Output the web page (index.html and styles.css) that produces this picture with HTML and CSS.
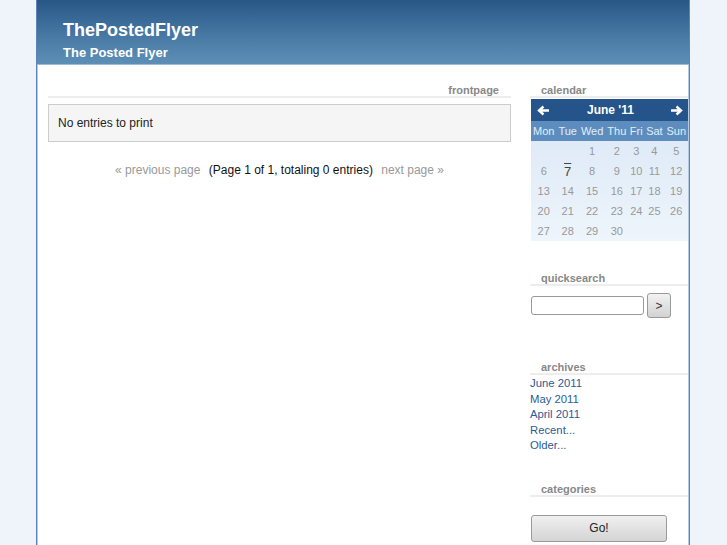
FILE: index.html
```html
<!DOCTYPE html>
<html lang="en">
<head>
    <meta charset="UTF-8">
    <title>ThePostedFlyer</title>
    <link rel="stylesheet" href="styles.css">
</head>
<body>
    <div class="page">
        <div class="header">
            <h1>ThePostedFlyer</h1>
            <h2>The Posted Flyer</h2>
        </div>
        <div class="content">
            <div class="main">
                <h3 class="main-title">frontpage</h3>
                <div class="entry">No entries to print</div>
                <div class="pager">
                    <a href="#" class="pager-link">&laquo; previous page</a>
                    <span class="pager-info">(Page 1 of 1, totaling 0 entries)</span>
                    <a href="#" class="pager-link">next page &raquo;</a>
                </div>
            </div>
            <div class="sidebar">
                <div class="widget widget-calendar">
                    <h3 class="side-title">calendar</h3>
                    <table class="calendar">
                        <tr class="cal-head">
                            <td class="cal-arrow">
                                <svg width="13" height="11" viewBox="0 0 13 11"><path d="M12 5.5H3M6.5 1.5L2 5.5l4.5 4" fill="none" stroke="#fff" stroke-width="2.4"/></svg>
                            </td>
                            <td colspan="5" class="cal-month">June '11</td>
                            <td class="cal-arrow">
                                <svg width="13" height="11" viewBox="0 0 13 11"><path d="M1 5.5h9M6.5 1.5L11 5.5l-4.5 4" fill="none" stroke="#fff" stroke-width="2.4"/></svg>
                            </td>
                        </tr>
                        <tr class="cal-days">
                            <td>Mon</td><td>Tue</td><td>Wed</td><td>Thu</td><td>Fri</td><td>Sat</td><td>Sun</td>
                        </tr>
                        <tr><td></td><td></td><td>1</td><td>2</td><td>3</td><td>4</td><td>5</td></tr>
                        <tr><td>6</td><td class="today">7</td><td>8</td><td>9</td><td>10</td><td>11</td><td>12</td></tr>
                        <tr><td>13</td><td>14</td><td>15</td><td>16</td><td>17</td><td>18</td><td>19</td></tr>
                        <tr><td>20</td><td>21</td><td>22</td><td>23</td><td>24</td><td>25</td><td>26</td></tr>
                        <tr><td>27</td><td>28</td><td>29</td><td>30</td><td></td><td></td><td></td></tr>
                    </table>
                </div>
                <div class="widget widget-search">
                    <h3 class="side-title">quicksearch</h3>
                    <form class="search">
                        <input type="text" class="search-input">
                        <button type="button" class="search-btn">&gt;</button>
                    </form>
                </div>
                <div class="widget widget-archives">
                    <h3 class="side-title">archives</h3>
                    <ul class="archive-list">
                        <li><a href="#">June 2011</a></li>
                        <li><a href="#">May 2011</a></li>
                        <li><a href="#">April 2011</a></li>
                        <li><a href="#">Recent...</a></li>
                        <li><a href="#">Older...</a></li>
                    </ul>
                </div>
                <div class="widget widget-categories">
                    <h3 class="side-title">categories</h3>
                    <button type="button" class="go-btn">Go!</button>
                </div>
            </div>
        </div>
    </div>
</body>
</html>
```

FILE: styles.css
```css
body {
    margin: 0;
    background: #eef4fa;
    font-family: "Liberation Sans", Arial, sans-serif;
    color: #222;
}

.page {
    width: 652px;
    min-height: 545px;
    margin: 0 0 0 36px;
    background: #fff;
    border-left: 1px solid #5f84b4;
    border-right: 1px solid #5f84b4;
    box-shadow: inset 1px 0 #b3c9e3, inset -1px 0 #b3c9e3;
}

.header {
    height: 64px;
    padding-left: 26px;
    background: linear-gradient(to bottom, #285786, #4a7ba6 60%, #5d8fb6);
    border-bottom: 1px solid #9cbcd6;
    color: #fff;
}

.header h1 {
    margin: 0;
    padding-top: 19px;
    font-size: 18px;
    line-height: 22px;
}

.header h2 {
    margin: 4px 0 0;
    font-size: 13px;
    line-height: 16px;
}

.content {
    display: flex;
    padding: 0 1px 0 11px;
}

.main {
    width: 463px;
}

.main-title,
.side-title {
    margin: 0;
    font-size: 11px;
    line-height: 12px;
    color: #888;
    border-bottom: 2px solid #ededed;
}

.main-title {
    margin-top: 19px;
    text-align: right;
    padding-right: 12px;
}

.entry {
    margin-top: 6px;
    padding: 11px 9px;
    font-size: 12px;
    line-height: 14px;
    background: #f5f5f5;
    border: 1px solid #ccc;
}

.pager {
    margin-top: 21px;
    text-align: center;
    font-size: 12px;
    line-height: 14px;
}

.pager-link {
    color: #999;
    text-decoration: none;
}

.pager-info {
    margin: 0 5px;
    color: #111;
}

.sidebar {
    width: 158px;
    margin-left: 19px;
}

.side-title {
    padding-left: 11px;
}

.widget-calendar {
    margin-top: 19px;
}

.calendar {
    width: 157px;
    margin: 1px 0 0 1px;
    border-collapse: collapse;
    font-size: 11px;
    background: linear-gradient(to bottom, #d8e6f5, #eef5fc);
}

.calendar td {
    padding: 0 1px;
    height: 20px;
    text-align: center;
    color: #999;
}

.cal-head td {
    height: 22px;
    background: #24548a;
    color: #fff;
    font-weight: bold;
    font-size: 12px;
}

.cal-head svg {
    display: block;
    margin: 0 auto;
}

.cal-days td {
    background: #5d8dbf;
    color: #e2edf8;
}

.calendar .today {
    color: #444;
    font-size: 13px;
    text-decoration: overline;
}

.widget-search {
    margin-top: 31px;
}

.search {
    display: flex;
    align-items: center;
    margin: 7px 0 0 1px;
}

.search-input {
    width: 109px;
    height: 15px;
    padding: 1px;
    border: 1px solid #999;
    border-radius: 3px;
}

.search-btn {
    width: 24px;
    height: 25px;
    margin-left: 3px;
    padding: 0;
    font-size: 12px;
    color: #333;
    background: linear-gradient(to bottom, #f2f2f2, #d2d2d2);
    border: 1px solid #9a9a9a;
    border-radius: 3px;
}

.widget-archives {
    margin-top: 43px;
}

.archive-list {
    list-style: none;
    margin: 0;
    padding: 1px 0 0;
    font-size: 11.3px;
    line-height: 15.5px;
}

.archive-list a {
    color: #2c5b96;
    text-decoration: none;
}

.widget-categories {
    margin-top: 29px;
}

.go-btn {
    display: block;
    width: 136px;
    height: 27px;
    margin: 18px 0 0 1px;
    font-family: "Liberation Sans", Arial, sans-serif;
    font-size: 12px;
    color: #222;
    background: linear-gradient(to bottom, #f0f0f0, #d4d4d4);
    border: 1px solid #9a9a9a;
    border-radius: 3px;
}
```
